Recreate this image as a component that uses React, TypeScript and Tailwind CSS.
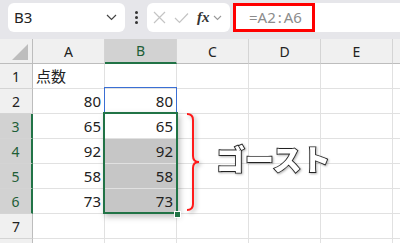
import React from "react";

const cols = ["A", "B", "C", "D", "E"];

// rows: [A value, B value]
const rows: [string, string][] = [
  ["点数", ""],
  ["80", "80"],
  ["65", "65"],
  ["92", "92"],
  ["58", "58"],
  ["73", "73"],
  ["", ""],
];

const font = "font-['Noto_Sans','Noto_Sans_CJK_JP',sans-serif]";

function Toolbar() {
  return (
    <div className="h-[39px] bg-[#e6e6ea] flex items-start pt-[3px] pl-[8px]">
      {/* name box */}
      <div className="w-[117px] h-[29px] bg-white rounded-[6px] flex items-center pl-[6px] pr-[6px] justify-between">
        <span className="text-[15px] text-[#222]">B3</span>
        <svg width="11" height="7" viewBox="0 0 11 7" className="mr-[2px]">
          <path d="M1 1 L5.5 5.5 L10 1" stroke="#444" strokeWidth="1.2" fill="none" />
        </svg>
      </div>
      {/* dots */}
      <div className="w-[22px] h-[29px] flex flex-col items-center justify-center gap-[2px]">
        <span className="w-[3px] h-[3px] rounded-full bg-[#333]" />
        <span className="w-[3px] h-[3px] rounded-full bg-[#333]" />
        <span className="w-[3px] h-[3px] rounded-full bg-[#333]" />
      </div>
      {/* formula controls */}
      <div className="w-[83px] h-[29px] bg-white rounded-[6px] flex items-center pl-[6px] gap-[8px]">
        <svg width="13" height="13" viewBox="0 0 13 13">
          <path d="M1 1 L12 12 M12 1 L1 12" stroke="#c4c4c4" strokeWidth="1.2" />
        </svg>
        <svg width="15" height="12" viewBox="0 0 15 12">
          <path d="M1 6 L5.5 10.5 L14 1.5" stroke="#c4c4c4" strokeWidth="1.2" fill="none" />
        </svg>
        <div className="flex items-center gap-[3px]">
          <span className="text-[15px] italic font-bold text-[#333] font-['Liberation_Serif',serif] leading-none">fx</span>
          <svg width="9" height="6" viewBox="0 0 9 6">
            <path d="M1 1 L4.5 4.5 L8 1" stroke="#999" strokeWidth="1.1" fill="none" />
          </svg>
        </div>
      </div>
      {/* formula input */}
      <div className="ml-[3px] flex-1 h-[29px] bg-white rounded-l-[6px] flex">
        <div className="w-[82px] h-[29px] border-[3px] border-[#ff0000] flex items-center pl-[13px]">
          <span className="text-[15px] text-[#8c8c8c]">
            =A2<span className="mx-[2px]">:</span>A6
          </span>
        </div>
      </div>
    </div>
  );
}

function HeaderRow() {
  return (
    <div className="flex h-[25px]">
      <div className="w-[33px] shrink-0 bg-[#f0f0f0] border-r border-b border-[#bdbdbd] relative overflow-hidden">
        <svg width="33" height="25" className="absolute left-0 top-0">
          <polygon points="28,5 28,21 12,21" fill="#bdbdbd" />
        </svg>
      </div>
      {cols.map((c) => {
        const sel = c === "B";
        return (
          <div
            key={c}
            className={
              "w-[72px] shrink-0 flex items-center justify-center text-[14px] border-r border-[#d4d4d4] " +
              (sel
                ? "bg-[#d2d2d2] text-[#1e5e37] border-b-[2px] border-b-[#217346]"
                : "bg-[#f0f0f0] text-[#222] border-b border-b-[#bdbdbd]")
            }
          >
            {c}
          </div>
        );
      })}
      <div className="flex-1 bg-[#f0f0f0] border-b border-[#bdbdbd]" />
    </div>
  );
}

function DataRow({ n, a, b }: { n: number; a: string; b: string }) {
  const sel = n >= 3 && n <= 6;
  const gray = n >= 4 && n <= 6;
  return (
    <div className="flex h-[25px]">
      <div
        className={
          "w-[33px] shrink-0 flex items-center justify-center text-[14px] border-b border-[#d4d4d4] " +
          (sel
            ? "bg-[#d2d2d2] text-[#1e5e37] border-r-[2px] border-r-[#217346]"
            : "bg-[#f0f0f0] text-[#222] border-r border-r-[#bdbdbd]")
        }
      >
        {n}
      </div>
      <div
        className={
          "w-[72px] shrink-0 flex items-center px-[3px] text-[15px] text-[#222] border-r border-b border-[#e1e1e1] bg-white " +
          (n === 1 ? "justify-start" : "justify-end")
        }
      >
        {a}
      </div>
      <div
        className={
          "w-[72px] shrink-0 flex items-center justify-end px-[3px] text-[15px] text-[#222] border-r border-b border-[#e1e1e1] " +
          (gray ? "bg-[#c6c6c6]" : "bg-white")
        }
      >
        {b}
      </div>
      <div className="w-[72px] shrink-0 border-r border-b border-[#e1e1e1] bg-white" />
      <div className="w-[72px] shrink-0 border-r border-b border-[#e1e1e1] bg-white" />
      <div className="w-[72px] shrink-0 border-r border-b border-[#e1e1e1] bg-white" />
      <div className="flex-1 border-b border-[#e1e1e1] bg-white" />
    </div>
  );
}

function EmptyRow() {
  return (
    <div className="flex h-[25px]">
      <div className="w-[33px] shrink-0 bg-[#f0f0f0] border-r border-[#bdbdbd]" />
      {cols.map((c) => (
        <div key={c} className="w-[72px] shrink-0 border-r border-[#e1e1e1] bg-white" />
      ))}
      <div className="flex-1 bg-white" />
    </div>
  );
}

export default function App() {
  return (
    <div className={`w-[400px] h-[243px] overflow-hidden bg-white relative ${font}`}>
      <Toolbar />
      <div className="relative">
        <HeaderRow />
        {rows.map((r, i) => (
          <DataRow key={i} n={i + 1} a={r[0]} b={r[1]} />
        ))}
        <EmptyRow />

        {/* B2 blue outline */}
        <div className="absolute left-[104px] top-[48px] w-[73px] h-[26px] border border-[#3b6fd4]" />

        {/* selection B3:B6 */}
        <div className="absolute left-[103px] top-[73px] w-[75px] h-[102px] border-[2px] border-[#217346] shadow-[2px_3px_6px_rgba(0,0,0,0.25)]" />
        <div className="absolute left-[174px] top-[172px] w-[7px] h-[7px] bg-[#217346] border border-white" />

        {/* brace */}
        <svg
          width="24"
          height="104"
          viewBox="0 0 24 104"
          className="absolute left-[183px] top-[72px] drop-shadow-[2px_2px_2px_rgba(0,0,0,0.3)]"
        >
          <path
            d="M4 3 Q10 3 10 9 L10 45 Q10 51 16 51 Q10 51 10 57 L10 93 Q10 99 4 99"
            stroke="#ff1a1a"
            strokeWidth="2"
            fill="none"
          />
        </svg>

        {/* annotation text */}
        <div className="absolute left-[216px] top-[105px] text-[29px] font-black leading-none text-white [-webkit-text-stroke:1.8px_#222] [paint-order:stroke_fill] drop-shadow-[1px_1px_1px_rgba(0,0,0,0.3)] font-['Noto_Sans_CJK_JP',sans-serif]">
          ゴースト
        </div>
      </div>
    </div>
  );
}
